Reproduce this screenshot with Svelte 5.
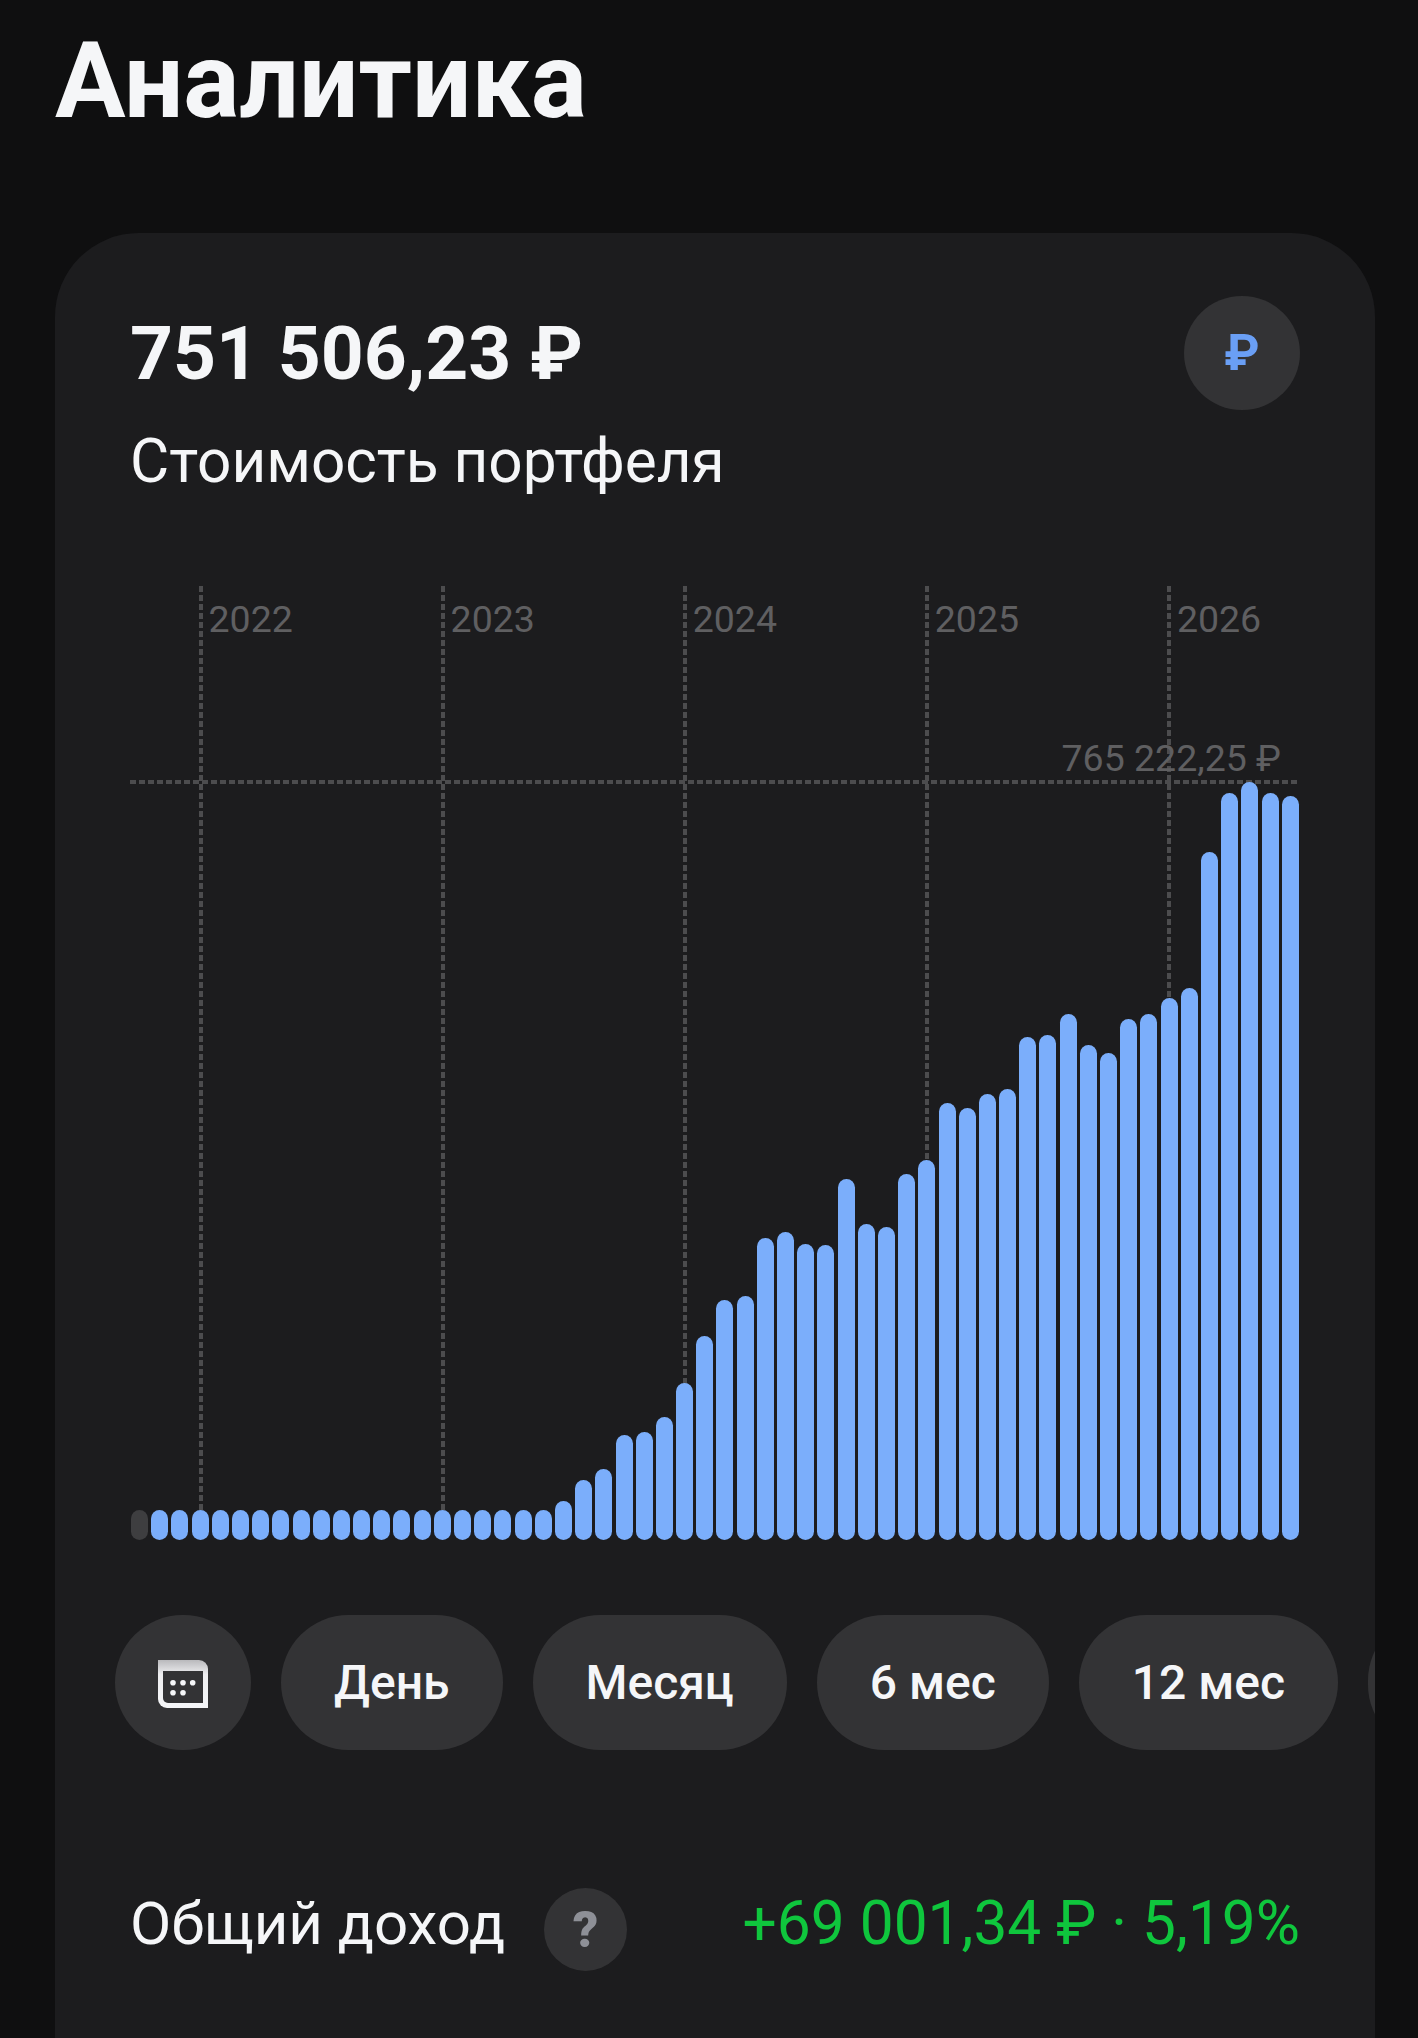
<script>
  const tops = [1510,1510,1510,1510,1510,1510,1510,1510,1510,1510,1510,1510,1510,1510,1510,1510,1510,1510,1510,1510,1510,1500.7,1479.7,1469,1435,1432,1417,1383,1336,1300,1296,1238,1232,1244,1245,1179,1224,1227,1174,1160,1102.5,1108,1093.5,1089,1037,1035,1013.5,1045,1053,1019,1013.5,998,988,852,793,782,793,796];
  const bars = tops.map((t) => 1540 - t);
  const years = [2022, 2023, 2024, 2025, 2026];
  const chips = ['День', 'Месяц', '6 мес', '12 мес'];
</script>

<main class="page">
  <h1 class="title">Аналитика</h1>
  <section class="card">
    <header class="head">
      <div class="amount">751 506,23 ₽</div>
      <div class="currency">₽</div>
    </header>
    <div class="subtitle">Стоимость портфеля</div>

    <div class="chart">
      {#each years as y, i}
        <div class="vline" style="left: {67.5 + 242.1 * i}px">
          <span class="year">{y}</span>
        </div>
      {/each}
      <div class="hline"><span class="max">765 222,25 ₽</span></div>
      <div class="bars">
        {#each bars as h, i}
          <div class="bar" class:empty={i === 0} style="height: {h}px"></div>
        {/each}
      </div>
    </div>

    <div class="chips">
      <div class="chip icon">
        <svg class="cal" width="50" height="48" viewBox="0 0 50 48">
          <defs>
            <linearGradient id="band" x1="0" y1="0" x2="0" y2="1">
              <stop offset="0" stop-color="#b9b9bc" />
              <stop offset="0.3" stop-color="#eeeef0" />
              <stop offset="1" stop-color="#f5f6f8" />
            </linearGradient>
          </defs>
          <path d="M0 0H41a9 9 0 0 1 9 9V48H9a9 9 0 0 1-9-9Z" fill="url(#band)" />
          <path d="M5 11H45V43H10a5 5 0 0 1-5-5Z" fill="#333335" />
          <g fill="#f5f6f8">
            <circle cx="15" cy="22.7" r="2.8" />
            <circle cx="25" cy="22.7" r="2.8" />
            <circle cx="34.7" cy="22.7" r="2.8" />
            <circle cx="15" cy="32.7" r="2.8" />
            <circle cx="25" cy="32.7" r="2.8" />
          </g>
        </svg>
      </div>
      {#each chips as c}
        <div class="chip">{c}</div>
      {/each}
      <div class="chip more"></div>
    </div>

    <div class="income">
      <div class="label">
        <span class="lift">Общий доход</span>
        <span class="help">?</span>
      </div>
      <div class="value lift">+69 001,34 ₽ · 5,19%</div>
    </div>
  </section>
</main>

<style>
  :global(body) {
    margin: 0;
    background: #0f0f10;
  }
  .page {
    height: 2038px;
    overflow: hidden;
    box-sizing: border-box;
    padding: 0 43px 0 55px;
    font-family: Roboto, "Liberation Sans", sans-serif;
    color: #f5f6f8;
  }
  .title {
    margin: 0;
    height: 233px;
    padding-top: 20px;
    box-sizing: border-box;
    font-size: 105px;
    line-height: 123px;
    font-weight: 700;
  }
  .card {
    height: 1900px;
    box-sizing: border-box;
    padding: 63px 75px 0;
    background: #1c1c1e;
    border-radius: 84px;
    overflow: hidden;
  }
  .head {
    display: flex;
    justify-content: space-between;
    align-items: center;
    height: 114px;
  }
  .amount {
    font-size: 75px;
    font-weight: 700;
    line-height: 88px;
  }
  .currency {
    width: 116px;
    height: 114px;
    border-radius: 50%;
    background: #333335;
    color: #6a9ff5;
    font-size: 50px;
    font-weight: 700;
    display: flex;
    align-items: center;
    justify-content: center;
  }
  .subtitle {
    margin-top: 17px;
    font-size: 60.3px;
    line-height: 70px;
    font-weight: 400;
  }
  .chart {
    position: relative;
    margin: 89px 0 0 1px;
    height: 954px;
    width: 1168px;
  }
  .vline {
    position: absolute;
    top: 0;
    width: 4px;
    height: 924px;
    background: repeating-linear-gradient(to bottom, #4c4c4e 0 6px, transparent 6px 9px);
  }
  .year {
    position: absolute;
    left: 10px;
    top: 11px;
    font-size: 37.5px;
    line-height: 44px;
    color: #5f5f61;
  }
  .hline {
    position: absolute;
    left: -1px;
    top: 194px;
    width: 1167px;
    height: 4px;
    background: repeating-linear-gradient(to right, #4c4c4e 0 6px, transparent 6px 9px);
  }
  .max {
    position: absolute;
    right: 16px;
    bottom: 4px;
    font-size: 37.5px;
    line-height: 44px;
    color: #5f5f61;
    white-space: nowrap;
  }
  .bars {
    position: absolute;
    inset: 0;
    display: flex;
    align-items: flex-end;
    justify-content: space-between;
  }
  .bar {
    width: 17px;
    background: #7baefb;
    border-radius: 8.5px;
  }
  .bar.empty {
    background: #3e3e40;
  }
  .chips {
    display: flex;
    gap: 30px;
    margin-top: 75px;
    margin-left: -15px;
    width: 1290px;
  }
  .chip {
    flex: none;
    height: 135px;
    padding: 0 53px;
    border-radius: 68px;
    background: #333335;
    display: flex;
    align-items: center;
    font-size: 48px;
    font-weight: 500;
  }
  .chip.icon {
    width: 136px;
    padding: 0;
    justify-content: center;
    box-sizing: border-box;
  }
  .cal {
    margin-top: 3px;
  }
  .chip.more {
    width: 130px;
    padding: 0;
  }
  .income {
    margin-top: 138px;
    display: flex;
    justify-content: space-between;
    align-items: center;
    height: 83px;
    font-size: 60px;
  }
  .lift {
    padding-bottom: 12px;
  }
  .label {
    display: flex;
    align-items: center;
    gap: 39px;
  }
  .help {
    width: 83px;
    height: 83px;
    border-radius: 50%;
    background: #333335;
    color: #8e9097;
    font-size: 50px;
    font-weight: 900;
    display: flex;
    align-items: center;
    justify-content: center;
  }
  .value {
    color: #0fc63d;
    font-size: 60.4px;
  }
</style>
